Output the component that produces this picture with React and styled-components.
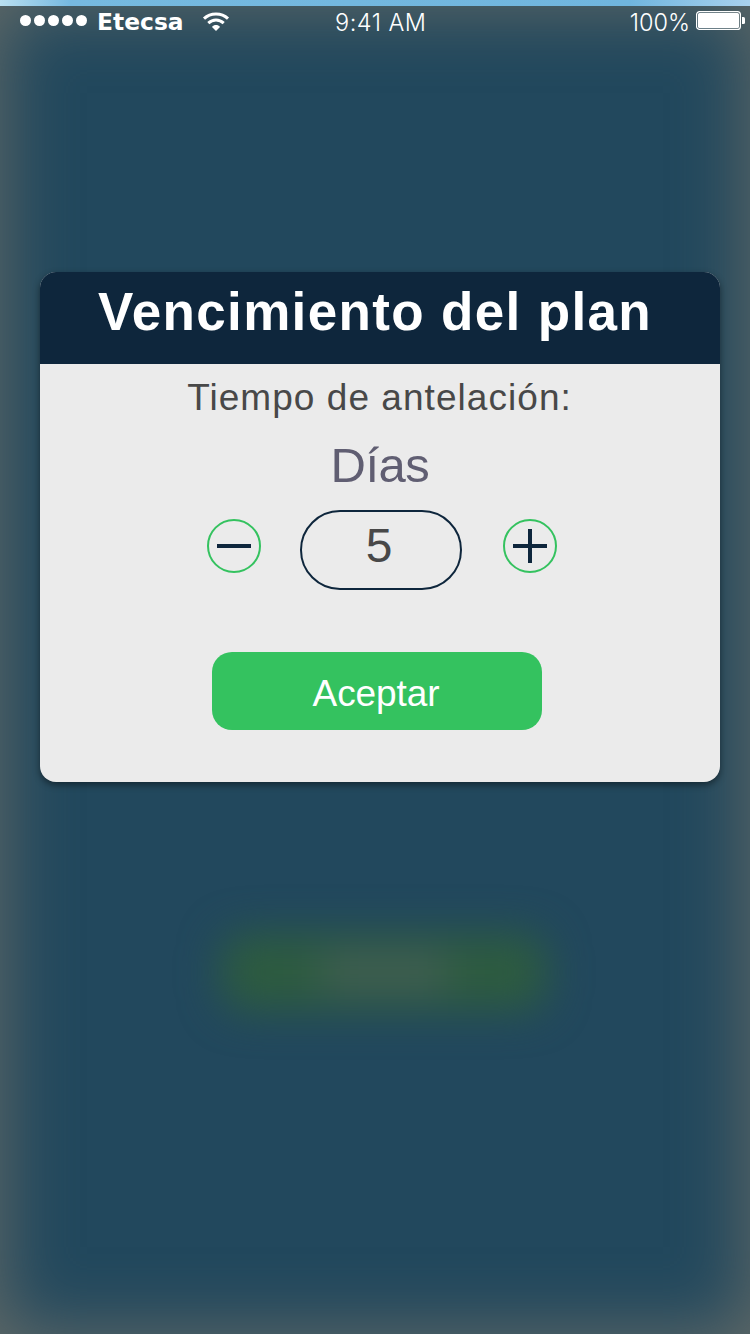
import React, { useState } from "react";
import styled, { createGlobalStyle } from "styled-components";

const navy = "#0e263c";
const green = "#34c25f";

const GlobalStyle = createGlobalStyle`
  * { box-sizing: border-box; }
  body { margin: 0; background: #22485d; }
  button { font: inherit; border: 0; padding: 0; background: none; cursor: pointer; }
`;

const Screen = styled.div`
  display: flex;
  flex-direction: column;
  width: 750px;
  height: 1334px;
  overflow: hidden;
  font-family: "Liberation Sans", Arial, sans-serif;
`;

const Sky = styled.div`
  height: 6px;
  flex: none;
  background: linear-gradient(90deg, #b9dff0 0, #76b9e0 70px, #70b5de 630px, #a9d2ee 750px);
`;

const Backdrop = styled.div`
  flex: 1;
  display: flex;
  flex-direction: column;
  background: #22485d;
  box-shadow: inset 0 0 72px rgb(102, 108, 104);
`;

const StatusBar = styled.header`
  display: grid;
  grid-template-columns: 335px 1fr auto;
  align-items: center;
  height: 32px;
  padding: 0 5px 0 0;
  color: #fff;
  font-family: Inter, sans-serif;
  font-size: 23.5px;
  font-weight: 350;
`;

const Carrier = styled.div`
  display: flex;
  align-items: center;
  padding: 0 0 2px 20px;
`;

const SignalDots = styled.div`
  display: flex;
  gap: 3px;
  margin: 0 10px 2px 0;
`;

const Dot = styled.i`
  width: 11px;
  height: 11px;
  border-radius: 50%;
  background: #fff;
`;

const CarrierName = styled.span`
  font: bold 23.4px/30px "DejaVu Sans", sans-serif;
  margin-right: 18px;
`;

const Clock = styled.time`
  line-height: 30px;
  letter-spacing: 0.5px;
`;

const Battery = styled.div`
  display: flex;
  align-items: center;
  gap: 6px;
  line-height: 32px;

  svg {
    margin-bottom: 4px;
  }
`;

const Percent = styled.span`
  padding-top: 1px;
`;

const Dialog = styled.section`
  width: 680px;
  height: 510px;
  margin: 234px 0 0 40px;
  border-radius: 16px;
  overflow: hidden;
  background: #ebebeb;
  box-shadow: 0 3px 7px rgba(0, 0, 0, 0.45);
  display: flex;
  flex-direction: column;
  align-items: center;
`;

const DialogTitle = styled.h1`
  align-self: stretch;
  height: 92px;
  margin: 0;
  padding-right: 10px;
  background: ${navy};
  color: #fff;
  font-size: 53px;
  line-height: 80px;
  letter-spacing: 1.35px;
  text-align: center;
  white-space: nowrap;
`;

const Caption = styled.p`
  margin: 13px 0 0;
  padding-right: 1px;
  color: #484848;
  font-size: 37px;
  line-height: 42px;
  letter-spacing: 1.05px;
`;

const Unit = styled.p`
  margin: 19px 0 0;
  color: #605e72;
  font-size: 49px;
  line-height: 54px;
  letter-spacing: -0.5px;
`;

const Stepper = styled.div`
  display: flex;
  width: 350px;
  margin: 18px 0 0 4px;
`;

const StepButton = styled.button`
  display: grid;
  place-items: center;
  width: 54px;
  height: 54px;
  margin-top: 9px;
  border: 2px solid ${green};
  border-radius: 50%;
`;

const Value = styled.output`
  width: 162px;
  height: 80px;
  margin: 0 41px 0 39px;
  padding-right: 4px;
  border: 2px solid ${navy};
  border-radius: 40px;
  color: #484848;
  font-size: 48px;
  line-height: 67px;
  text-align: center;
`;

const Accept = styled.button`
  && {
    width: 330px;
    height: 78px;
    margin: 62px 6px 0 0;
    padding: 6px 2px 0 0;
    border-radius: 20px;
    background: ${green};
    color: #fff;
    font-size: 37px;
    letter-spacing: -0.1px;
  }
`;

const BlurredButton = styled.div`
  display: grid;
  place-items: center;
  width: 326px;
  height: 78px;
  margin: 151px 0 0 221px;
  border-radius: 24px;
  background: #2d5b40;
  filter: blur(20px);
`;

const BlurredLabel = styled.div`
  width: 126px;
  height: 36px;
  background: #435e54;
`;

const Wifi = () => (
  <svg width="28" height="20" viewBox="0 0 28 20" fill="none" stroke="#fff">
    <path d="M2 6.7C8.5.5 19.5.5 26 6.7" strokeWidth="3" />
    <path d="M6.3 11.2C10.8 7 17.2 7 21.7 11.2" strokeWidth="3" />
    <path d="M10 15C12 12.4 16 12.4 18 15L14 19Z" fill="#fff" stroke="none" />
  </svg>
);

const BatteryIcon = () => (
  <svg width="49" height="20" viewBox="0 0 49 20">
    <rect x=".6" y=".6" width="43.8" height="17.8" rx="3" fill="none" stroke="#fff" strokeWidth="1.2" />
    <rect x="2" y="2" width="41" height="15" rx="1.5" fill="#fff" />
    <path d="M46 6h1.5q1.5 0 1.5 1.5v4q0 1.5-1.5 1.5H46z" fill="#fff" />
  </svg>
);

const StepIcon = ({ plus }) => (
  <svg width="34" height="34" viewBox="0 0 34 34" stroke={navy} strokeWidth="4">
    <path d={plus ? "M0 17h34M17 0v34" : "M0 17h34"} />
  </svg>
);

export default function App() {
  const [days, setDays] = useState(5);
  return (
    <Screen>
      <GlobalStyle />
      <Sky />
      <Backdrop>
        <StatusBar>
          <Carrier>
            <SignalDots>
              {[0, 1, 2, 3, 4].map((n) => <Dot key={n} />)}
            </SignalDots>
            <CarrierName>Etecsa</CarrierName>
            <Wifi />
          </Carrier>
          <Clock>9:41 AM</Clock>
          <Battery>
            <Percent>100%</Percent>
            <BatteryIcon />
          </Battery>
        </StatusBar>
        <Dialog>
          <DialogTitle>Vencimiento del plan</DialogTitle>
          <Caption>Tiempo de antelación:</Caption>
          <Unit>Días</Unit>
          <Stepper>
            <StepButton aria-label="Menos" onClick={() => setDays(Math.max(1, days - 1))}>
              <StepIcon />
            </StepButton>
            <Value>{days}</Value>
            <StepButton aria-label="Más" onClick={() => setDays(days + 1)}>
              <StepIcon plus />
            </StepButton>
          </Stepper>
          <Accept>Aceptar</Accept>
        </Dialog>
        <BlurredButton>
          <BlurredLabel />
        </BlurredButton>
      </Backdrop>
    </Screen>
  );
}
